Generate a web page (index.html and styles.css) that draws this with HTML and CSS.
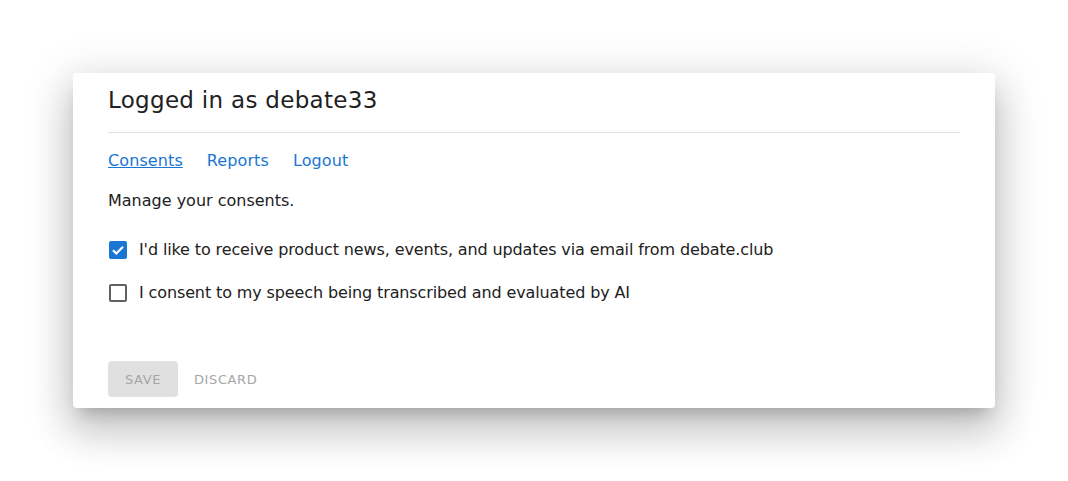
FILE: index.html
```html
<!DOCTYPE html>
<html>
<head>
<meta charset="utf-8">
<link rel="stylesheet" href="styles.css">
</head>
<body>
<div class="card">
  <div class="header"><h1 class="title">Logged in as debate33</h1></div>
  <nav class="tabs">
    <a class="tab active" href="#">Consents</a>
    <a class="tab" href="#">Reports</a>
    <a class="tab" href="#">Logout</a>
  </nav>
  <p class="intro">Manage your consents.</p>
  <div class="options">
    <label class="option">
      <span class="box checked"><svg viewBox="0 0 18 18" width="18" height="18"><path d="M4 9.2l3.3 3.3L14 5.8" fill="none" stroke="#fff" stroke-width="2.2"/></svg></span>
      <span class="label">I'd like to receive product news, events, and updates via email from debate.club</span>
    </label>
    <label class="option">
      <span class="box"></span>
      <span class="label">I consent to my speech being transcribed and evaluated by AI</span>
    </label>
  </div>
  <div class="actions">
    <button class="btn save">Save</button>
    <button class="btn discard">Discard</button>
  </div>
</div>
</body>
</html>
```
FILE: styles.css
```css
* { box-sizing: border-box; }
html, body { margin: 0; padding: 0; background: #fff; }
body {
  width: 1068px;
  height: 481px;
  display: flex;
  align-items: center;
  justify-content: center;
  font-family: "DejaVu Sans", "Noto Sans", sans-serif;
  color: #212121;
}
.card {
  width: 922px;
  height: 335px;
  background: #fff;
  border-radius: 4px;
  padding: 0 35px;
  box-shadow: 0px 11px 15px -7px rgba(0,0,0,0.2), 0px 24px 38px 3px rgba(0,0,0,0.14), 0px 9px 46px 8px rgba(0,0,0,0.12);
  display: flex;
  flex-direction: column;
}
.header {
  height: 60px;
  border-bottom: 1px solid #e0e0e0;
  padding-top: 11px;
}
.title {
  margin: 0;
  font-size: 23px;
  font-weight: 400;
  line-height: 32px;
  color: #212121;
  letter-spacing: 0.3px;
}
.tabs {
  display: flex;
  gap: 24px;
  margin-top: 16px;
}
.tab {
  font-size: 16px;
  line-height: 24px;
  color: #1976d2;
  text-decoration: none;
  letter-spacing: 0.1px;
}
.tab.active { text-decoration: underline; }
.intro {
  margin: 16px 0 0;
  font-size: 16px;
  line-height: 24px;
}
.options {
  margin-top: 15px;
  display: flex;
  flex-direction: column;
}
.option {
  height: 43px;
  display: flex;
  align-items: center;
  gap: 12px;
  padding-left: 1px;
  font-size: 16px;
  letter-spacing: -0.12px;
}
.box {
  width: 18px;
  height: 18px;
  border: 2px solid #616161;
  border-radius: 2px;
  display: block;
  flex: none;
}
.box.checked {
  border: none;
  background: #1976d2;
}
.box svg { display: block; }
.actions {
  margin-top: auto;
  margin-bottom: 11px;
  display: flex;
  gap: 8px;
}
.btn {
  height: 36px;
  border: none;
  border-radius: 4px;
  font-family: inherit;
  font-size: 13px;
  font-weight: 500;
  text-transform: uppercase;
  letter-spacing: 0.6px;
  color: #a6a6a6;
  background: transparent;
  padding: 0 8px;
}
.btn.save {
  width: 70px;
  background: #e0e0e0;
}
```
